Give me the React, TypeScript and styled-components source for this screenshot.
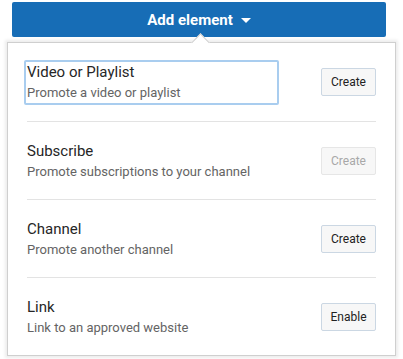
import styled, { createGlobalStyle } from 'styled-components';

const GlobalStyle = createGlobalStyle`
  body {
    margin: 0;
    background: #fff;
    font-family: Roboto, "Noto Sans", Arial, sans-serif;
  }
`;

const Page = styled.div`
  padding-top: 2px;
  width: 403px;
  height: 359px;
  overflow: hidden;
`;

const AddButton = styled.button`
  display: flex;
  align-items: center;
  justify-content: center;
  gap: 8px;
  margin-left: 12px;
  width: 374px;
  height: 35px;
  border: 0;
  border-radius: 2px;
  background: #176db6;
  color: #fff;
  font-family: Roboto, Arial, sans-serif;
  font-size: 15px;
  font-weight: 700;
  padding: 0;
`;

const Caret = styled.span`
  width: 0;
  height: 0;
  border-left: 5px solid transparent;
  border-right: 5px solid transparent;
  border-top: 5px solid #fff;
  margin-top: 1px;
`;

const Popup = styled.div`
  position: relative;
  margin-top: 5px;
  margin-left: 7px;
  width: 389px;
  box-sizing: border-box;
  border: 1px solid #cfcfcf;
  background: #fff;
  box-shadow: 0 0 3px 2px rgba(0, 0, 0, 0.08);
  padding: 0 19px;

  &::before {
    content: '';
    position: absolute;
    top: -7px;
    left: 186px;
    width: 12px;
    height: 12px;
    background: #fff;
    border-top: 1px solid #cfcfcf;
    border-left: 1px solid #cfcfcf;
    transform: rotate(45deg);
  }
`;

const Row = styled.div<{ $height: number }>`
  display: flex;
  align-items: center;
  justify-content: space-between;
  height: ${(p) => p.$height}px;
  border-bottom: 1px solid #e3e3e3;

  &:last-child {
    border-bottom: 0;
  }
`;

const TextBlock = styled.div<{ $focused?: boolean }>`
  display: flex;
  flex-direction: column;
  gap: 2px;
  box-sizing: border-box;
  ${(p) =>
    p.$focused
      ? `
    width: 255px;
    margin-left: -3px;
    padding: 1px 1px 2px;
    border: 2px solid #a9cdef;
    border-radius: 2px;
  `
      : ''}
`;

const Title = styled.div`
  font-size: 15px;
  line-height: 19px;
  color: #262626;
`;

const Subtitle = styled.div`
  font-size: 13px;
  line-height: 17px;
  color: #646464;
`;

const ActionButton = styled.button<{ $disabled?: boolean }>`
  width: 55px;
  height: 28px;
  box-sizing: border-box;
  border: 1px solid ${(p) => (p.$disabled ? '#e6e6e6' : '#cbd7e3')};
  border-radius: 2px;
  background: #f7f7f7;
  color: ${(p) => (p.$disabled ? '#a8a8a8' : '#222')};
  font-family: Roboto, Arial, sans-serif;
  font-size: 12px;
  padding: 0;
`;

const items = [
  { title: 'Video or Playlist', sub: 'Promote a video or playlist', action: 'Create', focused: true, height: 78 },
  { title: 'Subscribe', sub: 'Promote subscriptions to your channel', action: 'Create', disabled: true, height: 77 },
  { title: 'Channel', sub: 'Promote another channel', action: 'Create', height: 77 },
  { title: 'Link', sub: 'Link to an approved website', action: 'Enable', height: 77 },
];

function App() {
  return (
    <Page>
      <GlobalStyle />
      <AddButton>
        Add element
        <Caret />
      </AddButton>
      <Popup>
        {items.map((item) => (
          <Row key={item.title} $height={item.height}>
            <TextBlock $focused={item.focused}>
              <Title>{item.title}</Title>
              <Subtitle>{item.sub}</Subtitle>
            </TextBlock>
            <ActionButton $disabled={item.disabled}>{item.action}</ActionButton>
          </Row>
        ))}
      </Popup>
    </Page>
  );
}

export default App;
